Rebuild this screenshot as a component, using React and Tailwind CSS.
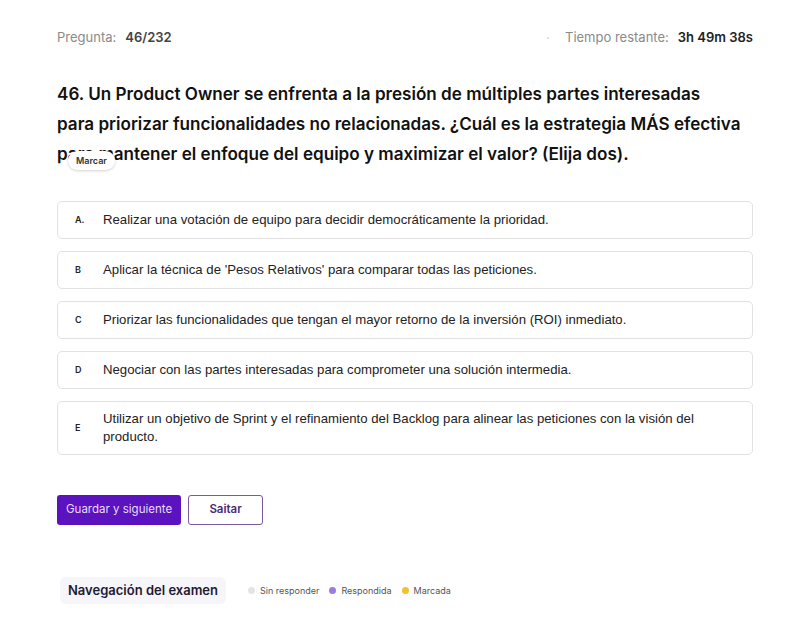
import { useState } from 'react';

const options = [
  { key: 'A.', text: 'Realizar una votación de equipo para decidir democráticamente la prioridad.' },
  { key: 'B', text: "Aplicar la técnica de 'Pesos Relativos' para comparar todas las peticiones." },
  { key: 'C', text: 'Priorizar las funcionalidades que tengan el mayor retorno de la inversión (ROI) inmediato.' },
  { key: 'D', text: 'Negociar con las partes interesadas para comprometer una solución intermedia.' },
  { key: 'E', text: 'Utilizar un objetivo de Sprint y el refinamiento del Backlog para alinear las peticiones con la visión del producto.' },
];

const App = () => {
  const [selected, setSelected] = useState([]);

  const toggle = (key) => {
    setSelected((prev) => (prev.includes(key) ? prev.filter((k) => k !== key) : [...prev, key]));
  };

  return (
    <div className="min-h-screen bg-white pl-[57px] pr-[47px] pt-[28px] text-[#1a1a1a]" style={{ fontFamily: 'Inter, "Noto Sans", sans-serif' }}>
      {/* cabecera */}
      <div className="flex items-center justify-between text-[13px]">
        <div className="flex items-center gap-[9px]">
          <span className="text-[#8a8a8a]">Pregunta:</span>
          <span className="font-semibold text-[#444]">46/232</span>
        </div>
        <div className="flex items-center">
          <span className="mr-[16px] h-[2px] w-[2px] rounded-full bg-[#d8d8d8]"></span>
          <span className="text-[#8a8a8a]">Tiempo restante:</span>
          <span className="ml-[9px] font-semibold text-[#222]">3h 49m 38s</span>
        </div>
      </div>

      {/* enunciado */}
      <div className="relative mt-[31px]">
        <h1 className="text-[17.1px] font-semibold leading-[30px] text-[#111]">
          46. Un Product Owner se enfrenta a la presión de múltiples partes interesadas
          <br />
          para priorizar funcionalidades no relacionadas. ¿Cuál es la estrategia MÁS efectiva
          <br />
          para mantener el enfoque del equipo y maximizar el valor? (Elija dos).
        </h1>
        <span className="absolute left-[11px] top-[72px] rounded-full bg-white px-[8px] py-[3px] text-[9px] font-semibold text-[#333] shadow-[0_1px_3px_rgba(0,0,0,0.18)]">
          Marcar
        </span>
      </div>

      {/* opciones */}
      <div className="mt-[32px] flex flex-col gap-[12px]">
        {options.map((o) => (
          <button
            key={o.key}
            type="button"
            onClick={() => toggle(o.key)}
            className={`flex min-h-[38px] items-center rounded-[5px] border py-[8px] pl-[17px] pr-[18px] text-left ${
              selected.includes(o.key) ? 'border-[#6d28d9] bg-[#f5f0ff]' : 'border-[#e2e2e2] bg-white'
            }`}
          >
            <span className="w-[28px] shrink-0 text-[9px] font-semibold text-[#222]">{o.key}</span>
            <span className="text-[13.2px] leading-[18px] text-[#222]" style={{ fontFamily: '"Liberation Sans", Arial, sans-serif' }}>
              {o.text}
            </span>
          </button>
        ))}
      </div>

      {/* acciones */}
      <div className="mt-[40px] flex items-center gap-[7px]">
        <button type="button" className="h-[30px] rounded-[3px] bg-[#5b12bf] px-[9px] text-[11.5px] text-[#e9dcff]">
          Guardar y siguiente
        </button>
        <button type="button" className="h-[30px] w-[75px] rounded-[3px] border border-[#7a5a9e] bg-white text-[11.5px] font-semibold text-[#4b2a7a]">
          Saitar
        </button>
      </div>

      {/* navegación */}
      <div className="mt-[52px] flex items-center gap-[22px]">
        <div className="ml-[3px] rounded-[6px] bg-[#f6f5fa] px-[8px] py-[4px] text-[13px] font-semibold text-[#1f1a33]">
          Navegación del examen
        </div>
        <div className="flex items-center gap-[10px] text-[9px] text-[#555]">
          <span className="flex items-center gap-[5px]">
            <span className="h-[7px] w-[7px] rounded-full bg-[#e4e4e4]"></span>
            Sin responder
          </span>
          <span className="flex items-center gap-[5px]">
            <span className="h-[7px] w-[7px] rounded-full bg-[#9b7be6]"></span>
            Respondida
          </span>
          <span className="flex items-center gap-[5px]">
            <span className="h-[7px] w-[7px] rounded-full bg-[#f5c02e]"></span>
            Marcada
          </span>
        </div>
      </div>
    </div>
  );
};

export default App;
